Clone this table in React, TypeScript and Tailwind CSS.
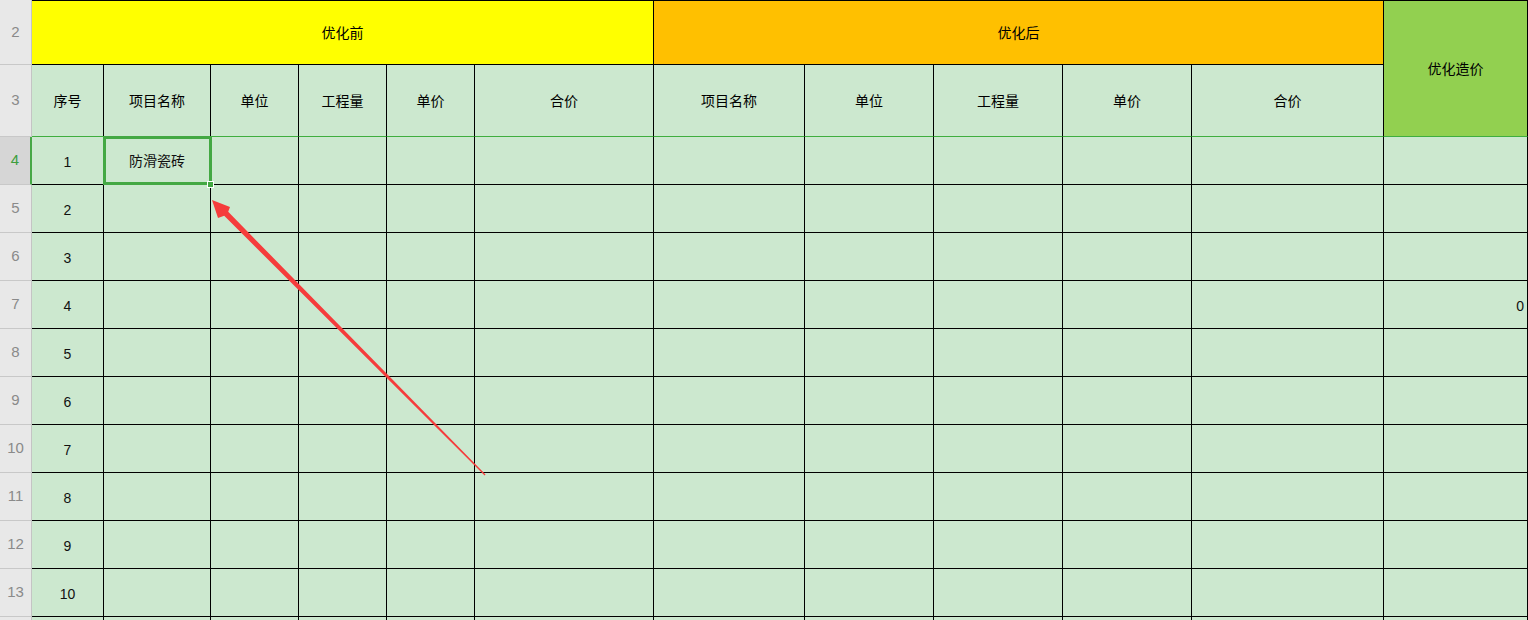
import React from "react";

const COLS = [72, 107, 88, 88, 88, 179, 151, 129, 129, 129, 192, 144];
const SUB = ["序号", "项目名称", "单位", "工程量", "单价", "合价", "项目名称", "单位", "工程量", "单价", "合价"];
const BODY_ROWS = [4, 5, 6, 7, 8, 9, 10, 11, 12, 13, 14];

function RowHead({ n, h, active }: { n?: number; h: string; active?: boolean }) {
  return (
    <div
      className={
        "flex items-center justify-center text-[15px] font-['Liberation_Sans',Arial,sans-serif] border-b border-b-[#c8c8c8] " +
        h +
        (active
          ? " bg-[#d6d6d6] text-[#3e9e3e] border-r-2 border-r-[#46a846]"
          : " bg-[#e8e8e8] text-[#8a8a8a] border-r border-r-[#c4c4c4]")
      }
    >
      {n}
    </div>
  );
}

export default function App() {
  return (
    <div className="relative w-[1528px] h-[620px] overflow-hidden bg-[#cce8cf]">
      <div className="grid grid-cols-[32px_72px_107px_88px_88px_88px_179px_151px_129px_129px_129px_192px_144px] grid-rows-[65px_72px_repeat(11,48px)]">
        {/* Row 2 */}
        <RowHead n={2} h="h-[65px]" />
        <div className="col-span-6 flex items-center justify-center bg-[#ffff00] border-t border-b border-r border-black text-[14px] text-black font-['Noto_Sans_CJK_SC',sans-serif]">
          优化前
        </div>
        <div className="col-span-5 flex items-center justify-center bg-[#ffc000] border-t border-b border-r border-black text-[14px] text-black font-['Noto_Sans_CJK_SC',sans-serif]">
          优化后
        </div>
        <div className="row-span-2 flex items-center justify-center bg-[#92d050] border-t border-t-black border-r border-r-black border-b border-b-[#3fae3f] text-[14px] text-black pb-[1px] font-['Noto_Sans_CJK_SC',sans-serif]">
          优化造价
        </div>

        {/* Row 3 */}
        <RowHead n={3} h="h-[72px]" />
        {SUB.map((t, i) => (
          <div
            key={i}
            className="flex items-center justify-center border-r border-r-black border-b border-b-[#3fae3f] text-[14px] text-black font-['Noto_Sans_CJK_SC',sans-serif]"
          >
            {t}
          </div>
        ))}

        {/* Body */}
        {BODY_ROWS.map((r, ri) => (
          <React.Fragment key={r}>
            <RowHead n={r < 14 ? r : undefined} h="h-[48px]" active={r === 4} />
            {COLS.map((_, ci) => (
              <div
                key={ci}
                className={
                  "flex items-center border-r border-b border-black text-[14px] text-[#111] " +
                  (ci === 1
                    ? "justify-center font-['Noto_Sans_CJK_SC',sans-serif]"
                    : ci === COLS.length - 1
                    ? "justify-end pr-[3px] pt-[3px] font-['Liberation_Sans',Arial,sans-serif]"
                    : "justify-center pt-[3px] font-['Liberation_Sans',Arial,sans-serif]")
                }
              >
                {ci === 0 && ri < 10 ? ri + 1 : ""}
                {ci === 1 && r === 4 ? "防滑瓷砖" : ""}
                {ci === COLS.length - 1 && r === 7 ? "0" : ""}
              </div>
            ))}
          </React.Fragment>
        ))}
      </div>

      {/* Selected cell border */}
      <div className="absolute left-[103px] top-[136px] w-[109px] h-[49px] border-[3px] border-[#43a843] pointer-events-none" />
      {/* Fill handle */}
      <div className="absolute left-[207px] top-[181px] w-[7px] h-[7px] bg-[#43a843] border border-white" />

      {/* Red arrow annotation */}
      <svg className="absolute left-0 top-0 pointer-events-none" width="1528" height="620">
        <polygon
          points="212,200 230,207 228.2,211.8 485.5,474.6 484.6,475.5 224.2,215.8 218,218"
          fill="#f53c3c"
        />
      </svg>
    </div>
  );
}
